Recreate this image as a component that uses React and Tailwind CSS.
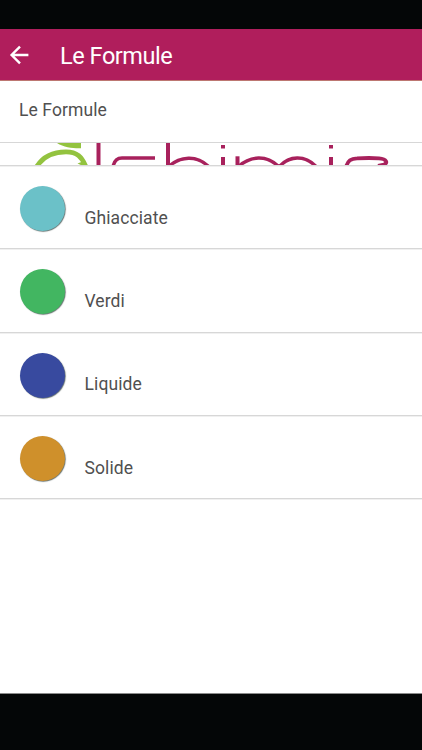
// App.jsx: Category list screen with a toolbar, section title and brand strip.

import React from 'react';

const categories = [
  { name: 'Ghiacciate', color: 'bg-[#6bc1c8]' },
  { name: 'Verdi', color: 'bg-[#42b661]' },
  { name: 'Liquide', color: 'bg-[#384a9f]' },
  { name: 'Solide', color: 'bg-[#cf902b]' },
];

function BackArrow() {
  return (
    <svg width="20" height="20" viewBox="0 0 20 20" fill="none" stroke="#fff" strokeWidth="2.4">
      <path d="M19.4 10H2.5M11 1.6L2.6 10L11 18.4" />
    </svg>
  );
}

function BrandStrip() {
  return (
    <svg className="block" width="422" height="22" viewBox="0 143 422 22" fill="none" stroke="#a8215c" strokeWidth="3.5">
      <path d="M57 143H81V148.2C73 148.4 64 147.5 57 143Z" fill="#93c33f" stroke="none" />
      <path d="M36.5 167C43 156 54 151.8 66 151.8C77 151.8 82 157 86 167" stroke="#93c33f" strokeWidth="4.8" />
      <path d="M77.5 163.5L84 161L88 166H83Z" fill="#93c33f" stroke="none" />
      <path d="M98.5 143V166" strokeWidth="4" />
      <path d="M113 167C114 161 117 158 122 158H155" />
      <path d="M168 143V166" strokeWidth="4" />
      <path d="M168 167C180 156 197 154.5 209 167" />
      <path d="M223 145V148.6M223 157V166" strokeWidth="4" />
      <path d="M237.5 156.3V166" strokeWidth="4" />
      <path d="M238 167C250 155.5 267 154.5 279 167C289 155.5 305 154.5 316.5 167" />
      <path d="M331 145V148.6M331 157V166" strokeWidth="4" />
      <path d="M346 167C348 160.5 351 158.6 357 158.4C365 157.9 373 157.9 379 158.4C387 159 388 163 384 164.6L378 165.8" strokeWidth="3.8" />
    </svg>
  );
}

function CategoryRow({ name, color }) {
  return (
    <li className="flex h-[83.25px] border-b border-[#d7d7d7] pl-5 pt-5 shadow-[0_1px_0_#f0f0f0]">
      <div className={`h-[45px] w-[45px] shrink-0 rounded-full shadow-[0.7px_0.7px_1px_#65716f] ${color}`} />
      <span className="ml-[19.5px] mt-[19.8px] h-6 text-[17.5px] leading-6 tracking-[0.1px]">{name}</span>
    </li>
  );
}

export default function App() {
  return (
    <div className="flex h-[750px] w-[422px] flex-col overflow-hidden bg-white font-['Roboto',sans-serif] text-[#505050]">
      <div className="h-[29px] shrink-0 bg-[#040607]" />
      <header className="flex h-[52px] shrink-0 items-center border-b border-[#bd7772] bg-[#b01e5c] pl-[9px] text-white">
        <BackArrow />
        <h1 className="ml-[31px] pt-[2px] text-[23.5px] leading-7 tracking-[-0.45px]">Le Formule</h1>
      </header>
      <main className="flex-1">
        <h2 className="flex h-[62px] items-center border-b border-[#d7d7d7] pb-[3px] pl-[19px] text-[17.5px] tracking-[0.1px]">
          Le Formule
        </h2>
        <div className="border-b border-[#d7d7d7] shadow-[0_1px_0_#f0f0f0]">
          <BrandStrip />
        </div>
        <ul>
          {categories.map((category) => (
            <CategoryRow key={category.name} {...category} />
          ))}
        </ul>
      </main>
      <div className="h-[57px] shrink-0 border-t border-[#8b8b8b] bg-[#040607]" />
    </div>
  );
}
